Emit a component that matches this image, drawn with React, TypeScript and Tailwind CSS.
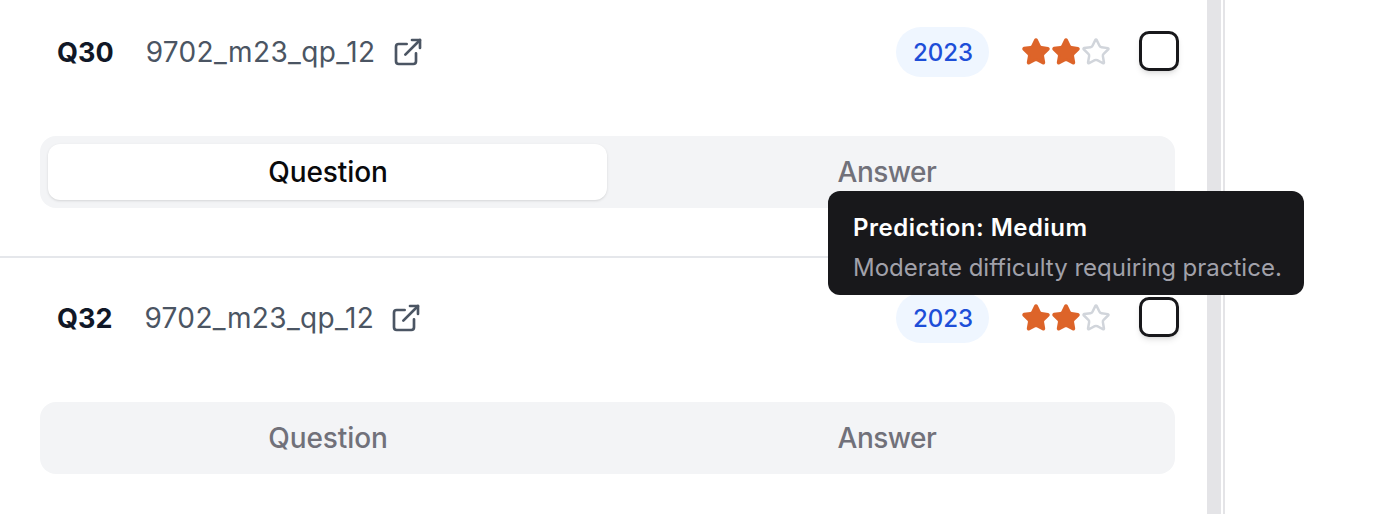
import { ExternalLink, Star } from "lucide-react";

function Block({ q, active, border }: { q: string; active: boolean; border: boolean }) {
  return (
    <div className={`pt-2 pb-12 ${border ? "border-b-2 border-[#e5e7eb]" : ""}`}>
      <div className="flex h-[104px] items-center pl-[57px] pr-[28px]">
        <span className="mt-[2px] text-[27px] font-bold text-[#111827]">{q}</span>
        <span className="ml-8 text-[28px] tracking-[0.36px] text-[#4b5563]">9702_m23_qp_12</span>
        <ExternalLink className="ml-4 h-8 w-8 text-[#4b5563]" strokeWidth={2} />
        <div className="ml-auto flex h-[50px] w-[93px] items-center justify-center rounded-full bg-[#eff6ff] pl-[1px] pt-[2px] text-[24px] font-medium text-[#1d4ed8]">
          2023
        </div>
        <div className="ml-[32px] flex">
          <Star className="h-[30px] w-[30px] fill-[#dd6429] text-[#dd6429]" />
          <Star className="h-[30px] w-[30px] fill-[#dd6429] text-[#dd6429]" />
          <Star className="h-[30px] w-[30px] text-[#d1d5db]" />
        </div>
        <div className="-mt-[2px] ml-[28px] h-10 w-10 rounded-[10px] border-[3px] border-[#18181b] bg-white shadow-md" />
      </div>
      <div className="ml-10 mr-8 mt-8 grid h-[72px] grid-cols-[559px_1fr] rounded-2xl bg-[#f3f4f6] p-2 text-[28px] font-medium">
        <div className={`flex items-center justify-center rounded-xl pl-[1px] tracking-[-0.1px] ${active ? "bg-white text-[#09090b] shadow-sm" : "text-[#71717a]"}`}>
          Question
        </div>
        <div className="flex items-center justify-center rounded-xl tracking-[-0.5px] text-[#71717a]">Answer</div>
      </div>
    </div>
  );
}

export default function App() {
  return (
    <div className="relative flex h-[514px] w-[1394px] overflow-hidden bg-white font-['Inter',sans-serif]">
      <div className="-mt-2 w-[1207px] shrink-0">
        <Block q="Q30" active border />
        <Block q="Q32" active={false} border={false} />
      </div>
      <div className="w-[14px] shrink-0 bg-[#e4e4e7]" />
      <div className="ml-[2px] w-[2px] shrink-0 bg-[#e4e4e7]" />
      <div className="absolute left-[828px] top-[191px] h-[104px] w-[476px] rounded-xl bg-[#18181b] pl-[25px] pt-[19px]">
        <div className="whitespace-nowrap text-[24px] font-semibold leading-[36px] tracking-[0.5px] text-white">Prediction: Medium</div>
        <div className="mt-[4px] whitespace-nowrap text-[24px] leading-[36px] text-[#a1a1aa]">Moderate difficulty requiring practice.</div>
      </div>
    </div>
  );
}
